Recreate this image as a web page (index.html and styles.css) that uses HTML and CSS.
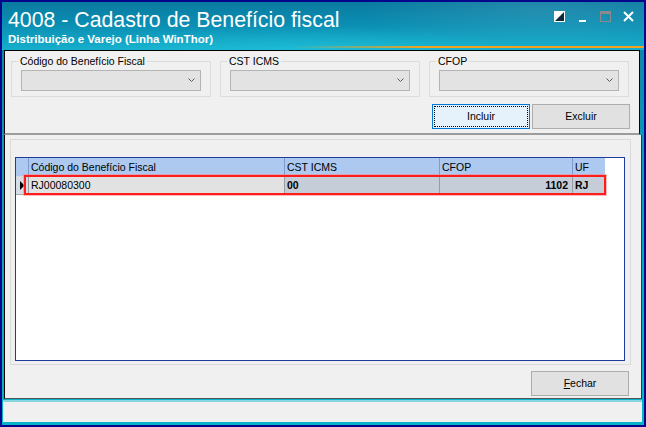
FILE: index.html
```html
<!DOCTYPE html>
<html lang="pt-BR">
<head>
<meta charset="utf-8">
<title>4008 - Cadastro de Benefício fiscal</title>
<link rel="stylesheet" href="styles.css">
</head>
<body>
<div class="window">
  <div class="frame">
    <header class="titlebar">
      <div class="titles">
        <h1 class="title">4008 - Cadastro de Benefício fiscal</h1>
        <p class="subtitle">Distribuição e Varejo (Linha WinThor)</p>
      </div>
      <div class="controls">
        <svg class="ctl" width="12" height="12" viewBox="0 0 12 12"><rect x="0" y="0" width="11" height="11" fill="#fff"/><polygon points="10,1 10,10 1,10" fill="#0b2a3a"/></svg>
        <svg class="ctl" width="12" height="12" viewBox="0 0 12 12"><rect x="2" y="9" width="7" height="2" fill="#fff"/></svg>
        <svg class="ctl" width="12" height="12" viewBox="0 0 12 12"><rect x="0.5" y="0.5" width="10" height="10" fill="none" stroke="#8a8a8a"/><rect x="0" y="0" width="11" height="3" fill="#8a8a8a"/></svg>
        <svg class="ctl" width="12" height="12" viewBox="0 0 12 12"><path d="M1 1 L10 10 M10 1 L1 10" stroke="#fff" stroke-width="2" fill="none"/></svg>
      </div>
    </header>
    <main class="content">
      <section class="filters">
        <div class="groups">
          <fieldset class="group">
            <legend>Código do Benefício Fiscal</legend>
            <div class="combo"><svg class="chev" width="7" height="4" viewBox="0 0 7 4"><polyline points="0.5,0.5 3.5,3.5 6.5,0.5" fill="none" stroke="#5a5a5a"/></svg></div>
          </fieldset>
          <fieldset class="group">
            <legend>CST ICMS</legend>
            <div class="combo"><svg class="chev" width="7" height="4" viewBox="0 0 7 4"><polyline points="0.5,0.5 3.5,3.5 6.5,0.5" fill="none" stroke="#5a5a5a"/></svg></div>
          </fieldset>
          <fieldset class="group">
            <legend>CFOP</legend>
            <div class="combo"><svg class="chev" width="7" height="4" viewBox="0 0 7 4"><polyline points="0.5,0.5 3.5,3.5 6.5,0.5" fill="none" stroke="#5a5a5a"/></svg></div>
          </fieldset>
        </div>
        <div class="actions">
          <button class="btn btn-focus">Incluir</button>
          <button class="btn">Excluir</button>
        </div>
      </section>
      <section class="lower">
        <div class="panel">
          <div class="grid">
            <div class="row head">
              <div class="cell ind"></div>
              <div class="cell">Código do Benefício Fiscal</div>
              <div class="cell">CST ICMS</div>
              <div class="cell">CFOP</div>
              <div class="cell">UF</div>
            </div>
            <div class="row data">
              <div class="cell ind"><svg width="5" height="9" viewBox="0 0 5 9"><polygon points="0,0 4.5,4.5 0,9" fill="#000"/></svg></div>
              <div class="cell c1">RJ00080300</div>
              <div class="cell b">00</div>
              <div class="cell b num">1102</div>
              <div class="cell b">RJ</div>
            </div>
            <div class="highlight"></div>
          </div>
        </div>
        <div class="footer">
          <button class="btn"><u>F</u>echar</button>
        </div>
      </section>
    </main>
    <footer class="statusbar"></footer>
  </div>
</div>
</body>
</html>
```
FILE: styles.css
```css
* { box-sizing: border-box; }
html, body { margin: 0; padding: 0; }
body {
  width: 646px;
  height: 427px;
  overflow: hidden;
  background: #06068c;
  font-family: "Liberation Sans", Arial, sans-serif;
  font-size: 10.5px;
  color: #000;
}
.window {
  width: 646px;
  height: 427px;
  border: 2px solid #06068c;
}
.frame {
  height: 423px;
  display: flex;
  flex-direction: column;
  padding: 0 2px 0 2px;
  background: linear-gradient(to bottom, #0b7ea2 0%, #0c9cbd 40%, #08b4c8 100%);
}
.titlebar {
  height: 48px;
  margin: 0 -2px;
  padding: 6px 9px 0 6px;
  display: flex;
  justify-content: space-between;
  align-items: flex-start;
  background:
    linear-gradient(to right, rgba(242,162,30,0) 290px, #f2a21e 420px) 0 44px / 100% 2px no-repeat,
    radial-gradient(ellipse 260px 60px at 540px 8px, rgba(255,255,255,0.10), rgba(255,255,255,0) 70%),
    radial-gradient(ellipse 340px 40px at 300px 52px, rgba(40,210,230,0.45), rgba(40,210,230,0) 70%),
    linear-gradient(to bottom, #0a7ba0 0%, #0b8db2 45%, #15afcc 100%);
}
.title {
  margin: 0;
  font-size: 21.3px;
  line-height: 24px;
  font-weight: normal;
  color: #fff;
  white-space: nowrap;
}
.subtitle {
  margin: 1px 0 0;
  font-size: 11.5px;
  line-height: 13px;
  font-weight: bold;
  color: #fff;
  white-space: nowrap;
}
.controls {
  display: flex;
  gap: 11px;
  margin-top: 3px;
}
.ctl { display: block; }

.content {
  height: 350px;
  display: flex;
  flex-direction: column;
}
.filters {
  height: 85px;
  margin-right: 2px;
  background: #f0f0f0;
  border: 1px solid #000;
  border-bottom: 2px solid #9c9c9c;
  padding: 4px 9px 0 6px;
}
.groups {
  display: flex;
  gap: 9px;
}
.group {
  width: 200px;
  margin: 0;
  padding: 2px 9px 5px;
  border: 1px solid #dcdcdc;
  min-width: 0;
}
.group legend {
  margin-left: -3px;
  padding: 0 2px;
  line-height: 13px;
  font-size: 10.5px;
}
.combo {
  height: 21px;
  border: 1px solid #b4b4b4;
  background: #e3e3e3;
  display: flex;
  justify-content: flex-end;
  align-items: center;
  padding-right: 5px;
}
.chev { display: block; }
.actions {
  display: flex;
  justify-content: flex-end;
  gap: 2px;
  margin-top: 7px;
}
.btn {
  width: 98px;
  height: 25px;
  padding: 0;
  margin: 0;
  border: 1px solid #adadad;
  background: #e1e1e1;
  font-family: "Liberation Sans", Arial, sans-serif;
  font-size: 10.5px;
  color: #000;
  display: flex;
  align-items: center;
  justify-content: center;
}
.btn-focus {
  border-color: #0078d7;
  background: #e5f1fb;
  outline: 1px dotted #000;
  outline-offset: -3px;
}
.btn u { text-decoration: underline; }

.lower {
  flex: 1;
  background: #f0f0f0;
  border-left: 1px solid #000;
  border-right: 1px solid #3a3a3a;
  border-bottom: 1px solid #555;
  display: flex;
  flex-direction: column;
}
.panel {
  width: 621px;
  height: 226px;
  margin: 4px 0 0 5px;
  border: 1px solid #dadada;
  padding: 17px 5px 3px 4px;
}
.grid {
  position: relative;
  height: 204px;
  border: 1px solid #1c3c9e;
  background: #fff;
}
.row {
  display: grid;
  grid-template-columns: 12px 256px 155px 133px 33px;
  width: 589px;
}
.head {
  height: 19px;
  border-bottom: 1px solid #d8d8d8;
}
.head .cell {
  background: #adc9ef;
  line-height: 18px;
  padding-left: 2px;
  border-left: 1px solid #7c9cd2;
  white-space: nowrap;
  overflow: hidden;
}
.head .cell.ind { border-left: 0; padding: 0; }
.data {
  height: 18px;
  border-bottom: 1px solid #a8a8a8;
}
.data .cell {
  background: #c4cdd8;
  line-height: 17px;
  padding-left: 2px;
  border-left: 1px solid #9c9c9c;
  white-space: nowrap;
}
.data .cell.ind {
  background: #d6dde6;
  border-left: 0;
  padding: 0 0 0 4px;
  display: flex;
  align-items: center;
}
.data .cell.ind svg { display: block; }
.data .cell.c1 { background: #e2e2e2; }
.data .cell.b { font-weight: bold; }
.data .cell.num { text-align: right; padding-right: 4px; }
.highlight {
  position: absolute;
  left: 8px;
  top: 17px;
  width: 582px;
  height: 20px;
  border: 2px solid #ff1c1c;
  box-shadow: 0 0 0 1px rgba(255, 130, 130, 0.55);
  pointer-events: none;
}
.footer {
  display: flex;
  justify-content: flex-end;
  margin: 6px 12px 0 0;
}
.statusbar {
  height: 22px;
  margin: 1px 0 3px -1px;
  border-top: 2px solid #86d6e0;
  background: #f0f0f0;
}
```
